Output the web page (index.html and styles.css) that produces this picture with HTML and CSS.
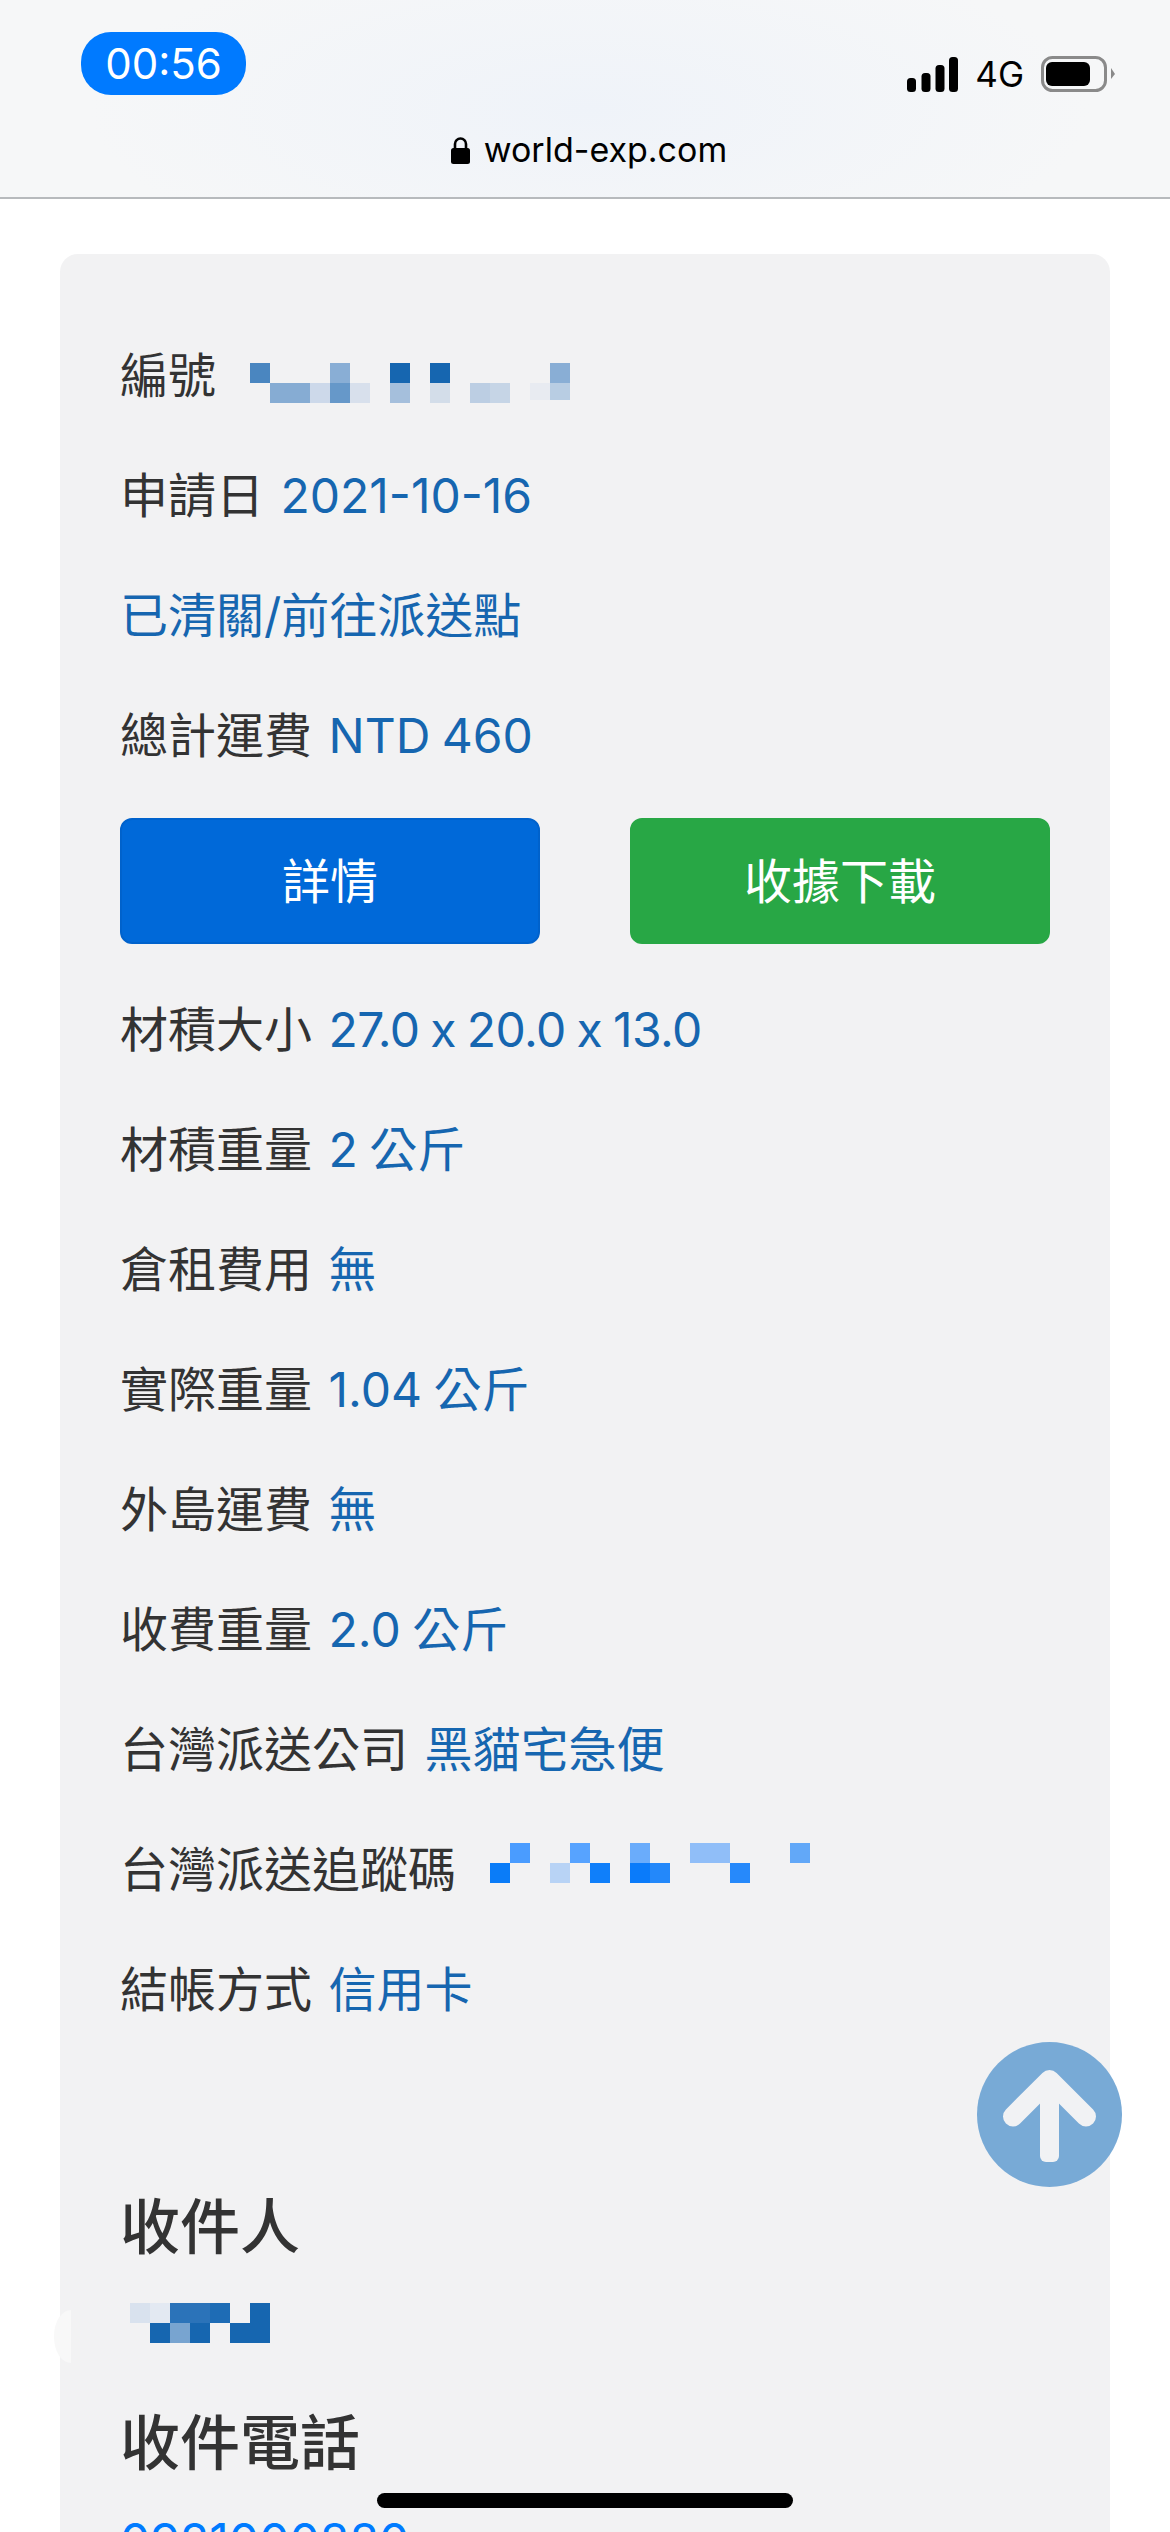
FILE: index.html
```html
<!DOCTYPE html>
<html lang="zh-Hant">

<head>
    <meta charset="UTF-8">
    <title>world-exp.com</title>
    <link rel="stylesheet" href="styles.css">
</head>

<body>
    <header class="topbar">
        <div class="statusrow">
            <div class="clock">00:56</div>
            <div class="statusicons">
                <svg class="signal" viewBox="0 0 51 35" width="51" height="35">
                    <rect x="0" y="21" width="9" height="14" rx="3.500" />
                    <rect x="14.500" y="16" width="9" height="19" rx="3.500" />
                    <rect x="28.500" y="8" width="9" height="27" rx="3.500" />
                    <rect x="42" y="0" width="9" height="35" rx="3.500" />
                </svg>
                <span class="network">4G</span>
                <svg class="battery" viewBox="0 0 74 36" width="74" height="36">
                    <rect x="1.500" y="1.500" width="63" height="33" rx="10" fill="none" stroke="#8a8a8a" stroke-width="3" />
                    <rect x="5" y="6" width="44" height="24" rx="6" fill="#000" />
                    <path d="M70 12l4 6l-4 5z" fill="#8a8a8a" />
                </svg>
            </div>
        </div>
        <div class="address">
            <svg class="lock" viewBox="0 0 19 27" width="19" height="27">
                <path d="M4 12V7a5.500 5.500 0 0 1 11 0v5" fill="none" stroke="#000" stroke-width="2.600" />
                <rect x="0" y="11" width="19" height="16" rx="2.500" fill="#000" />
            </svg>
            <span>world-exp.com</span>
        </div>
    </header>

    <main class="card">
        <p class="row">編號 <svg class="mosaic mosaic-id" viewBox="0 0 320 40" width="320" height="40">
                <rect x="0" y="0" width="20" height="20" fill="#4a86c0" />
                <rect x="80" y="0" width="20" height="20" fill="#89aed5" />
                <rect x="140" y="0" width="20" height="20" fill="#1666b0" />
                <rect x="180" y="0" width="20" height="20" fill="#1666b0" />
                <rect x="300" y="0" width="20" height="20" fill="#89aed5" />
                <rect x="20" y="20" width="40" height="20" fill="#86acd3" />
                <rect x="60" y="20" width="20" height="20" fill="#cdd9ea" />
                <rect x="80" y="20" width="20" height="20" fill="#6698c9" />
                <rect x="100" y="20" width="20" height="20" fill="#d8e0ec" />
                <rect x="140" y="20" width="20" height="20" fill="#a5bfdc" />
                <rect x="180" y="20" width="20" height="20" fill="#d3dde9" />
                <rect x="220" y="20" width="20" height="20" fill="#bccee3" />
                <rect x="240" y="20" width="20" height="20" fill="#c6d5e6" />
                <rect x="280" y="20" width="20" height="17" fill="#e8ebf1" />
                <rect x="300" y="20" width="20" height="17" fill="#b8cde3" />
            </svg></p>
        <p class="row">申請日 <span class="val">2021-10-16</span></p>
        <p class="row"><span class="val">已清關/前往派送點</span></p>
        <p class="row">總計運費 <span class="val">NTD 460</span></p>

        <div class="actions">
            <button class="btn btn-blue">詳情</button>
            <button class="btn btn-green">收據下載</button>
        </div>

        <p class="row">材積大小 <span class="val tight">27.0 x 20.0 x 13.0</span></p>
        <p class="row">材積重量 <span class="val">2 公斤</span></p>
        <p class="row">倉租費用 <span class="val">無</span></p>
        <p class="row">實際重量 <span class="val">1.04 公斤</span></p>
        <p class="row">外島運費 <span class="val">無</span></p>
        <p class="row">收費重量 <span class="val">2.0 公斤</span></p>
        <p class="row">台灣派送公司 <span class="val">黑貓宅急便</span></p>
        <p class="row">台灣派送追蹤碼 <svg class="mosaic mosaic-track" viewBox="0 0 320 40" width="320" height="40">
                <rect x="20" y="0" width="20" height="20" fill="#4a9cff" />
                <rect x="80" y="0" width="20" height="20" fill="#57a3ff" />
                <rect x="140" y="0" width="20" height="20" fill="#6aacfb" />
                <rect x="200" y="0" width="40" height="20" fill="#90bef8" />
                <rect x="300" y="0" width="20" height="20" fill="#62a8f8" />
                <rect x="0" y="20" width="20" height="20" fill="#0a7cf8" />
                <rect x="60" y="20" width="20" height="20" fill="#b8d3f5" />
                <rect x="100" y="20" width="20" height="20" fill="#0f7ffa" />
                <rect x="140" y="20" width="20" height="20" fill="#0a7bfa" />
                <rect x="160" y="20" width="20" height="20" fill="#2388fa" />
                <rect x="240" y="20" width="20" height="20" fill="#2689fb" />
            </svg></p>
        <p class="row">結帳方式 <span class="val">信用卡</span></p>

        <h3 class="heading first">收件人</h3>
        <p class="row"><svg class="mosaic mosaic-name" viewBox="0 0 140 40" width="140" height="40">
                <rect x="0" y="0" width="20" height="20" fill="#d9e2ee" />
                <rect x="20" y="0" width="20" height="20" fill="#e3e9f2" />
                <rect x="40" y="0" width="40" height="20" fill="#2b73b9" />
                <rect x="80" y="0" width="20" height="20" fill="#1e6cb5" />
                <rect x="120" y="0" width="20" height="20" fill="#1666b0" />
                <rect x="20" y="20" width="20" height="20" fill="#1666b0" />
                <rect x="40" y="20" width="20" height="20" fill="#78a4d0" />
                <rect x="60" y="20" width="20" height="20" fill="#1666b0" />
                <rect x="100" y="20" width="40" height="20" fill="#1666b0" />
            </svg></p>

        <h3 class="heading">收件電話</h3>
        <p class="row"><a class="phone">0921000880</a></p>
    </main>

    <div class="backswipe"></div>

    <button class="totop">
        <svg viewBox="0 0 145 145" width="145" height="145">
            <rect x="63" y="40" width="19" height="80" rx="6" fill="#f1f2f4" />
            <path d="M36 74.500L72.500 38L109 74.500" fill="none" stroke="#f1f2f4" stroke-width="20" stroke-linecap="round" stroke-linejoin="round" />
        </svg>
    </button>

    <div class="homebar"></div>
</body>

</html>
```

FILE: styles.css
```css
* {
    box-sizing: border-box;
}

html,
body {
    margin: 0;
    height: 2532px;
    overflow: hidden;
}

body {
    position: relative;
    background-color: #fff;
    color: #333;
    font-family: Inter, "Noto Sans CJK TC", sans-serif;
    font-size: 48px;
    line-height: 72px;
}

/* top bar */

.topbar {
    height: 199px;
    padding: 32px 55px 0 81px;
    background: radial-gradient(ellipse 500px 170px at 590px 110px, #eff3f9, #f6f7f8);
    border-bottom: 2px solid #b7babd;
}

.statusrow {
    display: flex;
    justify-content: space-between;
    align-items: flex-start;
}

.clock {
    width: 165px;
    height: 63px;
    border-radius: 30px;
    background-color: #007aff;
    color: #fff;
    font-size: 42px;
    line-height: 63px;
    text-align: center;
}

.statusicons {
    display: flex;
    align-items: center;
    gap: 17px;
    margin-top: 24px;
}

.signal {
    fill: #000;
}

.network {
    color: #000;
    font-size: 35px;
    line-height: 36px;
}

.address {
    display: flex;
    justify-content: center;
    align-items: center;
    gap: 14px;
    margin-top: 33px;
    padding-right: 18px;
    color: #000;
    font-size: 34px;
    line-height: 44px;
}

/* card */

.card {
    margin: 55px 60px 0;
    padding: 84px 60px 0;
    height: 2400px;
    background-color: #f2f2f3;
    border-radius: 18px;
}

.row {
    margin: 0 0 46px;
    padding-top: 2px;
    word-spacing: 3px;
}

.val {
    color: #1666b0;
    word-spacing: -2px;
}

.tight {
    letter-spacing: -0.6px;
}

.phone {
    color: #007bff;
}

.mosaic {
    margin-left: 17px;
}

.mosaic-id {
    vertical-align: -10px;
}

.mosaic-track {
    vertical-align: 4px;
}

.mosaic-name {
    margin-left: 10px;
    vertical-align: -1px;
}

.actions {
    display: flex;
    justify-content: space-between;
    margin-bottom: 48px;
}

.btn {
    width: 420px;
    height: 126px;
    padding: 0 0 6px;
    border-radius: 12px;
    color: #fff;
    font-family: inherit;
    font-size: 48px;
}

.btn-blue {
    background-color: #0069d9;
    border: 2px solid #0062cc;
}

.btn-green {
    background-color: #28a745;
    border: 2px solid #28a745;
}

.heading {
    margin: 0 0 24px;
    font-size: 60px;
    font-weight: 500;
    line-height: 72px;
}

.first {
    margin-top: 165px;
}

/* over the page */

.backswipe {
    position: absolute;
    left: 54px;
    top: 2310px;
    width: 17px;
    height: 53px;
    border-radius: 17px 0 0 17px / 26px 0 0 26px;
    background-color: #f8f8f8;
}

.totop {
    position: absolute;
    left: 977px;
    top: 2042px;
    width: 145px;
    height: 145px;
    padding: 0;
    border: 0;
    border-radius: 50%;
    background-color: #78aad6;
}

.totop svg {
    display: block;
}

.homebar {
    position: absolute;
    left: 377px;
    top: 2493px;
    width: 416px;
    height: 15px;
    border-radius: 8px;
    background-color: #000;
}
```
